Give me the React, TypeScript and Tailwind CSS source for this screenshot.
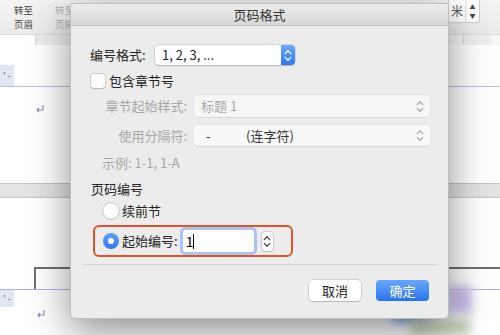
import React from "react";

const UpDown = ({ className = "" }: { className?: string }) => (
  <svg width="8" height="13" viewBox="0 0 8 13" className={className}>
    <path
      d="M1.2 4.6 L4 1.8 L6.8 4.6 M1.2 8.4 L4 11.2 L6.8 8.4"
      fill="none"
      stroke="currentColor"
      strokeWidth="1.3"
      strokeLinecap="round"
      strokeLinejoin="round"
    />
  </svg>
);

const Ret = ({ className = "" }: { className?: string }) => (
  <svg width="10" height="10" viewBox="0 0 10 10" className={className}>
    <path d="M8 1 V6 H2 M4 4 L2 6 L4 8" fill="none" stroke="#8a93b8" strokeWidth="1.2" />
  </svg>
);

export default function App() {
  return (
    <div className="relative w-[500px] h-[335px] overflow-hidden bg-white font-['Noto_Sans_CJK_SC','Noto_Sans',sans-serif]">
      {/* Background document */}
      <div className="flex flex-col w-full h-full">
        {/* toolbar */}
        <div className="h-[34px] bg-gradient-to-b from-[#f3f3f3] to-[#ebebeb] flex items-start relative">
          <div className="ml-[14px] mt-[3px] flex flex-col text-[9.5px] leading-[14px] text-[#454545]">
            <span>转至</span>
            <span>页眉</span>
          </div>
          <div className="ml-[22px] mt-[3px] flex flex-col text-[9.5px] leading-[14px] text-[#b0b0b0]">
            <span>转至</span>
            <span>页脚</span>
          </div>
          <div className="ml-auto mr-[20px] mt-0 flex h-[23px] rounded-b-[3px] border border-t-0 border-[#cfcfcf] bg-white">
            <div className="w-[16px] flex items-center justify-center text-[12px] text-[#555]">米</div>
            <div className="w-[14px] flex flex-col items-center justify-center text-[6px] leading-[9px] text-[#444] border-l border-[#e0e0e0]">
              <span>▲</span>
              <span>▼</span>
            </div>
          </div>
        </div>
        {/* ruler strip */}
        <div className="h-[11px] bg-[#f6f6f6] border-t border-[#dcdcdc] flex">
          <div className="w-[35px] bg-white" />
          <div className="w-[36px] border-x border-[#d6d6d6] bg-[#eeeeee]" />
          <div className="flex-1" />
          <div className="w-[28px] border-l border-[#dadada] bg-[#efefef]" />
          <div className="w-[9px]" />
        </div>
        {/* upper page */}
        <div className="h-[20px]" />
        <div className="h-[21px] flex items-end">
          <div className="w-[14px] h-full bg-[#dfe7f3] text-[9px] text-[#555] flex items-center justify-center leading-none">' -</div>
        </div>
        <div className="h-px bg-[#b6bbd8]" />
        <div className="h-[96px] relative">
          <Ret className="absolute left-[35px] top-[17px]" />
        </div>
        {/* page gap */}
        <div className="h-[15px] bg-[#e3e3e3] border-y border-[#c4c4c4]" />
        {/* lower page */}
        <div className="h-[69px]" />
        <div className="h-[22px] flex">
          <div className="w-[34px]" />
          <div className="flex-1 border-l-2 border-t-2 border-[#6f6f6f]" />
        </div>
        <div className="h-px bg-[#aeb3df]" />
        <div className="h-[17px] flex">
          <div className="w-[14px] bg-[#dfe7f3] text-[9px] text-[#555] flex items-center justify-center leading-none">' -</div>
        </div>
        <div className="relative flex-1">
          <Ret className="absolute left-[36px] top-[2px]" />
        </div>
      </div>

      {/* decorative watermark blur */}
      <div className="absolute left-[418px] top-[288px] w-[32px] h-[26px] bg-[#9ce6ef] blur-[3px]" />
      <div className="absolute left-[448px] top-[286px] w-[24px] h-[28px] bg-[#cfc1ee] blur-[4px]" />
      <div className="absolute left-[392px] top-[300px] w-[40px] h-[22px] bg-[#6fa6f4] blur-[4px]" />
      <div className="absolute left-[410px] top-[318px] w-[60px] h-[17px] bg-[#c9d5c0] blur-[5px]" />

      {/* Dialog */}
      <div className="absolute left-[70px] top-[3px] w-[379px] h-[316px] bg-[#ececec] rounded-b-[5px] border border-[#bdbdbd] shadow-[0_12px_40px_rgba(0,0,0,0.45)] flex flex-col text-[13px] text-[#222]">
        <div className="h-[22px] shrink-0 bg-gradient-to-b from-[#ececec] to-[#d7d7d7] border-b border-[#bdbdbd] flex items-center justify-center text-[13px] text-[#333]">
          页码格式
        </div>

        {/* row 1 */}
        <div className="mt-[19px] h-[20px] flex items-center">
          <span className="ml-[19px] w-[65px]">编号格式:</span>
          <div className="w-[140px] h-[20px] flex rounded-[4px] bg-white shadow-[0_0_0_0.5px_rgba(0,0,0,0.2),0_1px_1px_rgba(0,0,0,0.15)] overflow-hidden">
            <span className="flex-1 pl-[7px] leading-[20px] text-[13px]">1, 2, 3, ...</span>
            <div className="w-[14px] h-full bg-gradient-to-b from-[#6aaaf9] to-[#2f78ef] flex items-center justify-center text-white">
              <UpDown />
            </div>
          </div>
        </div>

        {/* row 2 */}
        <div className="mt-[9px] h-[14px] flex items-center">
          <div className="ml-[20px] w-[14px] h-[14px] rounded-[3px] bg-white shadow-[0_0_0_0.5px_rgba(0,0,0,0.28),0_1px_1px_rgba(0,0,0,0.1)]" />
          <span className="ml-[4px]">包含章节号</span>
        </div>

        {/* row 3 */}
        <div className="mt-[7px] h-[22px] flex items-center">
          <span className="w-[116px] text-right text-[#a6a6a6]">章节起始样式:</span>
          <div className="ml-[7px] w-[236px] h-[22px] flex items-center rounded-[4px] bg-[#f6f6f6] shadow-[0_0_0_0.5px_rgba(0,0,0,0.08),0_1px_1px_rgba(0,0,0,0.06)]">
            <span className="flex-1 pl-[7px] text-[#a8a8a8]">标题 1</span>
            <UpDown className="mr-[6px] text-[#a8a8a8]" />
          </div>
        </div>

        {/* row 4 */}
        <div className="mt-[8px] h-[21px] flex items-center">
          <span className="w-[116px] text-right text-[#a6a6a6]">使用分隔符:</span>
          <div className="ml-[7px] w-[236px] h-[21px] flex items-center rounded-[4px] bg-[#f8f8f8] shadow-[0_0_0_0.5px_rgba(0,0,0,0.08),0_1px_1px_rgba(0,0,0,0.06)]">
            <span className="pl-[12px] w-[52px] text-[#333]">-</span>
            <span className="flex-1 text-[#333]">(连字符)</span>
            <UpDown className="mr-[6px] text-[#a8a8a8]" />
          </div>
        </div>

        {/* row 5 */}
        <div className="mt-[9px] h-[16px] flex items-center">
          <span className="ml-[31px] text-[#a6a6a6]">示例: 1-1, 1-A</span>
        </div>

        {/* row 6 */}
        <div className="mt-[10px] h-[16px] flex items-center">
          <span className="ml-[20px]">页码编号</span>
        </div>

        {/* row 7 */}
        <div className="mt-[6px] h-[16px] flex items-center">
          <div className="ml-[32px] w-[16px] h-[16px] rounded-full bg-white shadow-[0_0_0_0.5px_rgba(0,0,0,0.28),0_1px_1px_rgba(0,0,0,0.1)]" />
          <span className="ml-[3px]">续前节</span>
        </div>

        {/* row 8 - highlighted */}
        <div className="mt-[6px] ml-[22px] w-[200px] h-[32px] rounded-[6px] border-2 border-[#e1532b] flex items-center">
          <div className="ml-[8px] w-[16px] h-[16px] rounded-full bg-gradient-to-b from-[#5fa3f8] to-[#2f78ef] flex items-center justify-center">
            <div className="w-[6px] h-[6px] rounded-full bg-white" />
          </div>
          <span className="ml-[3px]">起始编号:</span>
          <div className="ml-[5px] w-[71px] h-[22px] bg-white rounded-[2px] shadow-[0_0_0_3px_#a9c6f2] flex items-center">
            <span className="pl-[3px] text-[14px] text-black">1</span>
            <div className="w-px h-[15px] bg-black" />
          </div>
          <div className="ml-[8px] w-[11px] h-[19px] rounded-[3px] bg-white shadow-[0_0_0_0.5px_rgba(0,0,0,0.25),0_1px_1px_rgba(0,0,0,0.1)] flex items-center justify-center text-[#444]">
            <UpDown />
          </div>
        </div>

        {/* separator */}
        <div className="mt-[7px] mx-[12px] h-px bg-[#d3d3d3]" />

        {/* buttons */}
        <div className="mt-[15px] h-[21px] flex justify-end pr-[19px] gap-[15px]">
          <div className="w-[52px] h-[21px] rounded-[4px] bg-white shadow-[0_0_0_0.5px_rgba(0,0,0,0.22),0_1px_1px_rgba(0,0,0,0.12)] flex items-center justify-center">
            取消
          </div>
          <div className="w-[53px] h-[21px] rounded-[4px] bg-gradient-to-b from-[#67a8fa] to-[#2a73ef] flex items-center justify-center text-white">
            确定
          </div>
        </div>
      </div>
    </div>
  );
}
